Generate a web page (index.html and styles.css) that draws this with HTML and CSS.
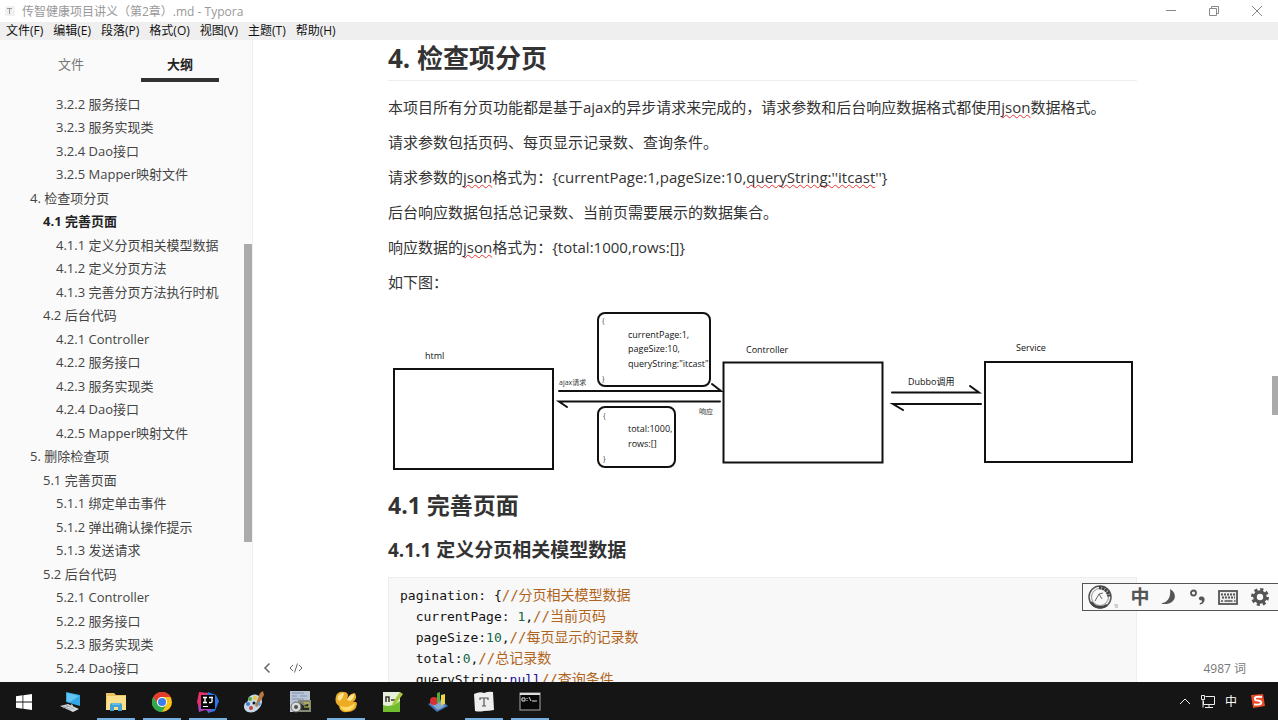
FILE: index.html
```html
<!DOCTYPE html>
<html lang="zh-CN">
<head>
<meta charset="utf-8">
<title>传智健康项目讲义（第2章）.md - Typora</title>
<link rel="stylesheet" href="styles.css">
</head>
<body>
<header class="titlebar">
  <svg class="app-icon" width="12" height="12" viewBox="0 0 12 12"><rect x="1" y="1" width="10" height="10" rx="1" fill="#f1f1f1"/><path d="M3 3.500h5M5.500 3.500v5.500" stroke="#999" fill="none"/></svg>
  <span class="window-title">传智健康项目讲义（第2章）.md - Typora</span>
  <div class="window-controls">
    <button aria-label="最小化"><svg width="12" height="12" viewBox="0 0 12 12"><path d="M1 5.500h10"/></svg></button>
    <button aria-label="还原"><svg width="12" height="12" viewBox="0 0 12 12"><path d="M1.500 3.500h7v7h-7zM3.500 3.500v-2h7v7h-2"/></svg></button>
    <button aria-label="关闭"><svg width="12" height="12" viewBox="0 0 12 12"><path d="M1 1l10 10M11 1L1 11"/></svg></button>
  </div>
</header>
<nav class="menubar">
  <button>文件(F)</button><button>编辑(E)</button><button>段落(P)</button><button>格式(O)</button><button>视图(V)</button><button>主题(T)</button><button>帮助(H)</button>
</nav>
<div class="workspace">
  <aside class="sidebar">
    <div class="tabs"><button class="tab">文件</button><button class="tab active">大纲</button></div>
    <nav class="outline">
      <a class="l3" href="#">3.2.2 服务接口</a>
      <a class="l3" href="#">3.2.3 服务实现类</a>
      <a class="l3" href="#">3.2.4 Dao接口</a>
      <a class="l3" href="#">3.2.5 Mapper映射文件</a>
      <a class="l1" href="#s4">4. 检查项分页</a>
      <a class="l2 current" href="#s41">4.1 完善页面</a>
      <a class="l3" href="#s411">4.1.1 定义分页相关模型数据</a>
      <a class="l3" href="#">4.1.2 定义分页方法</a>
      <a class="l3" href="#">4.1.3 完善分页方法执行时机</a>
      <a class="l2" href="#">4.2 后台代码</a>
      <a class="l3" href="#">4.2.1 Controller</a>
      <a class="l3" href="#">4.2.2 服务接口</a>
      <a class="l3" href="#">4.2.3 服务实现类</a>
      <a class="l3" href="#">4.2.4 Dao接口</a>
      <a class="l3" href="#">4.2.5 Mapper映射文件</a>
      <a class="l1" href="#">5. 删除检查项</a>
      <a class="l2" href="#">5.1 完善页面</a>
      <a class="l3" href="#">5.1.1 绑定单击事件</a>
      <a class="l3" href="#">5.1.2 弹出确认操作提示</a>
      <a class="l3" href="#">5.1.3 发送请求</a>
      <a class="l2" href="#">5.2 后台代码</a>
      <a class="l3" href="#">5.2.1 Controller</a>
      <a class="l3" href="#">5.2.2 服务接口</a>
      <a class="l3" href="#">5.2.3 服务实现类</a>
      <a class="l3" href="#">5.2.4 Dao接口</a>
    </nav>
    <div class="side-thumb"></div>
  </aside>
  <main class="editor">
    <article class="document">
      <h1 id="s4">4. 检查项分页</h1>
      <p>本项目所有分页功能都是基于ajax的异步请求来完成的，请求参数和后台响应数据格式都使用<span class="typo">json</span>数据格式。</p>
      <p>请求参数包括页码、每页显示记录数、查询条件。</p>
      <p>请求参数的<span class="typo">json</span>格式为：{currentPage:1,pageSize:10,<span class="typo">queryString:''itcast</span>''}</p>
      <p>后台响应数据包括总记录数、当前页需要展示的数据集合。</p>
      <p>响应数据的<span class="typo">json</span>格式为：{total:1000,rows:[]}</p>
      <p>如下图：</p>
      <svg class="diagram" viewBox="388 305 749 170" role="img" aria-label="分页请求流程">
        <g class="shape">
          <rect x="394" y="369" width="159" height="100"/>
          <rect x="598" y="313" width="112" height="73" rx="7"/>
          <rect x="598" y="407" width="77" height="60" rx="7"/>
          <rect x="723.500" y="362.500" width="159" height="100"/>
          <rect x="985" y="362" width="147" height="100"/>
          <path d="M559 391H721L712 384M720 401.500H559L567 407M892 392.500H979L970 386M981 404H893L903 410"/>
        </g>
        <g class="labels">
          <text x="425" y="359">html</text>
          <text x="746" y="353">Controller</text>
          <text x="1016" y="351">Service</text>
          <text x="628" y="338">currentPage:1,</text>
          <text x="628" y="352">pageSize:10,</text>
          <text x="628" y="367">queryString:"itcast"</text>
          <text x="628" y="432">total:1000,</text>
          <text x="628" y="447">rows:[]</text>
          <text x="908" y="385">Dubbo调用</text>
          <g class="small">
            <text x="559" y="385">ajax请求</text>
            <text x="699" y="414">响应</text>
            <text x="602" y="323">{</text><text x="602" y="381">}</text>
            <text x="603" y="418">{</text><text x="603" y="461">}</text>
          </g>
        </g>
      </svg>
      <h2 id="s41">4.1 完善页面</h2>
      <h3 id="s411">4.1.1 定义分页相关模型数据</h3>
      <pre class="code">pagination: {<span class="comment">//分页相关模型数据</span>
  currentPage: <span class="number">1</span>,<span class="comment">//当前页码</span>
  pageSize:<span class="number">10</span>,<span class="comment">//每页显示的记录数</span>
  total:<span class="number">0</span>,<span class="comment">//总记录数</span>
  queryString:<span class="atom">null</span><span class="comment">//查询条件</span>
</pre>
    </article>
    <div class="status-left">
      <button aria-label="收起侧栏"><svg width="8" height="12" viewBox="0 0 8 12"><path d="M6.500 1.500L2 6l4.500 4.500"/></svg></button>
      <button aria-label="源代码模式"><svg width="14" height="12" viewBox="0 0 14 12"><path class="thin" d="M4 3L1 6l3 3M10 3l3 3-3 3M8.500 1.500l-3 9"/></svg></button>
    </div>
    <div class="word-count">4987 词</div>
    <div class="page-thumb"></div>
    <div class="ime">
      <svg class="ime-logo" width="32" height="26" viewBox="0 0 32 26"><circle cx="13" cy="13" r="11" fill="none" stroke="#555" stroke-width="1.500"/><circle cx="13" cy="13" r="8.500" fill="none" stroke="#777" stroke-width=".8"/><path d="M12 3.500a10 10 0 0 1 10 9" fill="none" stroke="#444" stroke-width="3.500" stroke-dasharray="2.500 .7"/><path d="M4 18a11 11 0 0 0 16 3" fill="none" stroke="#444" stroke-width="2.500"/><path d="M8 17l4-7 3 5M12 10l4-1" fill="none" stroke="#666"/><path d="M27 21h4M28 23h3" stroke="#aaa"/></svg>
      <span class="ime-mode">中</span>
      <svg width="16" height="18" viewBox="0 0 16 18"><path d="M9 1c9 5 5 16-7 15q-2 0-1-1c6-1 9-6 8-14z" fill="#555"/></svg>
      <svg width="18" height="18" viewBox="0 0 18 18"><circle cx="4.500" cy="5" r="2.500" fill="none" stroke="#555" stroke-width="1.800"/><path d="M12 8.500c5-1 5 7-1 8l-.5-1c2-.8 3-1.800 2.500-3-4 0-4-3.500-1-4z" fill="#555"/></svg>
      <svg width="20" height="15" viewBox="0 0 20 15"><rect x="1" y="1" width="18" height="13" fill="#eee" stroke="#555" stroke-width="1.800"/><path d="M3 4.500h14M4 7.500h13" stroke="#555" stroke-width="1.800" stroke-dasharray="2 1"/><path d="M3 11h2M6.500 11h8M16 11h1.500" stroke="#555" stroke-width="1.600"/></svg>
      <svg width="20" height="20" viewBox="0 0 20 20"><circle cx="10" cy="10" r="5" fill="none" stroke="#555" stroke-width="3.600"/><circle cx="10" cy="10" r="7.500" fill="none" stroke="#555" stroke-width="3" stroke-dasharray="3.100 2.790"/></svg>
    </div>
  </main>
</div>
<footer class="taskbar">
  <button class="start" aria-label="开始"><svg width="16" height="16" viewBox="0 0 16 16" fill="#fff"><path d="M0 2.300l6.500-1v6.300H0zM7.300 1.200L16 0v7.600H7.300zM0 8.400h6.500v6.300L0 13.700zM7.300 8.400H16V16l-8.700-1.200z"/></svg></button>
  <button aria-label="此电脑"><svg width="22" height="22" viewBox="0 0 22 22"><path d="M7 1l14 3v11L7 11z" fill="#35a7e6"/><path d="M8 2l12 3-9 6-3-1z" fill="#63c5f4"/><path d="M12 13l2 1v3l-2 1z" fill="#aeb8bd"/><path d="M1 15l8-2 11 5-6 3z" fill="#d3d9dc"/><path d="M4 15l8 4M7 14l8 4M4 17l6-2" stroke="#8d999f" stroke-width=".7"/></svg></button>
  <button class="open" aria-label="资源管理器"><svg width="22" height="20" viewBox="0 0 22 20"><path d="M1 1h8l2 2h10v15H1z" fill="#e9c35f"/><path d="M2 4h19v14H1z" fill="#fbdf8a"/><path d="M5 19v-6q0-2 2-2h8q2 0 2 2v6h-4v-4H9v4z" fill="#3fa4d5"/><path d="M7 12h8" stroke="#89d3f4"/></svg></button>
  <button class="open" aria-label="Chrome"><svg width="22" height="22" viewBox="0 0 22 22"><circle cx="11" cy="11" r="10" fill="#fbc116"/><path d="M2.300 6A10 10 0 0 1 19.700 6H11a5 5 0 0 0-4.300 7.500z" fill="#e33b2e"/><path d="M2.300 6A10 10 0 0 0 11 21l4.300-7.500A5 5 0 0 1 6.700 13.500z" fill="#2da94f"/><circle cx="11" cy="11" r="5" fill="#fff"/><circle cx="11" cy="11" r="4" fill="#3b7ded"/></svg></button>
  <button class="open" aria-label="IntelliJ IDEA"><svg width="24" height="24" viewBox="0 0 24 24"><path d="M3 2l9 1 1 10-9 8-3-9z" fill="#e9306a"/><path d="M12 2l8 3 3 6-4 10-7 2-3-9z" fill="#2877e8"/><path d="M2 16l9-4 5 10-7-2-6 2z" fill="#a841ba"/><rect x="5" y="5" width="14" height="14" fill="#080808"/><path d="M7 7.500h4M9 7.500v5M7 12.500h4M13 7.500h4M16 7.500v4q0 1.300-3 1" stroke="#fff" stroke-width="1.300" fill="none"/><path d="M7 16.500h5" stroke="#fff"/></svg></button>
  <button aria-label="画图"><svg width="24" height="24" viewBox="0 0 24 24"><path d="M15 5c8 2 6 13-3 17-8 2-12-4-9-9 4-1 2-3 4-6 2-2 5-3 8-2z" fill="#c8d9e6"/><path d="M18 3l3-2 1 4-7 12-2-1z" fill="#b8783e"/><circle cx="8" cy="9" r="2" fill="#58a743"/><circle cx="13" cy="8" r="2" fill="#e8c63b"/><circle cx="6" cy="14" r="2" fill="#3d7dd0"/><circle cx="9" cy="18" r="2" fill="#cb4140"/><circle cx="12" cy="13" r="1.500" fill="#151515"/><circle cx="17" cy="14" r="1.700" fill="#4e9bd8"/></svg></button>
  <button aria-label="工具"><svg width="24" height="24" viewBox="0 0 24 24"><path d="M2 1h20v12H2z" fill="#b9c4d5"/><path d="M2 13h8v9H2z" fill="#c9ced6"/><path d="M4 3h12M4 6h5M12 6h7M4 9h12" stroke="#8294b2" stroke-width="1.200"/><rect x="10" y="10" width="13" height="12" fill="#858a78"/><path d="M12 13l4 3 5-3v7h-9z" fill="#282b25"/><path d="M16 13h5v4h-5" stroke="#d1cf44" fill="none"/><circle cx="8" cy="17" r="5" fill="#dadada" stroke="#626a71"/><circle cx="8" cy="17" r="2" fill="#515151"/></svg></button>
  <button class="open" aria-label="金币"><svg width="24" height="24" viewBox="0 0 24 24"><path d="M2 6Q4 1 10 2q4 0 4 4l-1 3q3-6 8-6 3 6-2 9 4-1 4 2-1 8-10 8-7 1-8-6Q0 13 2 6z" fill="#ecac26"/><path d="M4 6q2-3 6-3-1 6-5 8-2-2-1-5zM13 10q2-5 7-6 1 4-4 7z" fill="#ffe494"/><path d="M6 16q8 3 15-3-1 8-9 8-5-1-6-5z" fill="#ffda64"/></svg></button>
  <button aria-label="记事本"><svg width="22" height="24" viewBox="0 0 22 24"><path d="M2 2h17v20H2z" fill="#e8efd9"/><path d="M2 15q8 3 17-4v11H2z" fill="#71bd2f"/><path d="M5 12V7h3v5M10 10h4" stroke="#333" fill="none" stroke-width="1.500"/><path d="M19 2l3 2-8 11-3 1 1-4z" fill="#a5c83c"/></svg></button>
  <button aria-label="图形"><svg width="22" height="22" viewBox="0 0 22 22"><path d="M1 13l12-5 8 7-11 6z" fill="#4574b4"/><path d="M4 13l9-3 5 5-7 4z" fill="#84a9d1"/><circle cx="7" cy="10" r="4" fill="#db3032"/><path d="M10 2l3-1v10l-3 1z" fill="#50ac3d"/><path d="M14 4l4-1v10l-4 1z" fill="#ecd44a"/></svg></button>
  <button class="open" aria-label="Typora"><svg width="22" height="22" viewBox="0 0 22 22"><path d="M1 3q6-3 10-1 5-2 9-1l1 18q-5 1-10 1-5 1-9 0z" fill="#eee"/><path d="M7 9V7h8v2M11 7v8M9 15h4" fill="none" stroke="#555" stroke-width="1.200"/></svg></button>
  <button class="open" aria-label="命令提示符"><svg width="22" height="20" viewBox="0 0 22 20"><rect x="1" y="1" width="20" height="17" fill="#080808" stroke="#aaa"/><path d="M1 2h20" stroke="#ddd" stroke-width="2"/><path d="M3 9V6h3v3H3M8 6v1M8 8v1M10 5l2 4M13 9h5" stroke="#ddd" fill="none"/></svg></button>
  <div class="tray">
    <svg width="12" height="8" viewBox="0 0 12 8"><path d="M1 7l5-5 5 5"/></svg>
    <svg width="16" height="15" viewBox="0 0 16 15"><path d="M5.500 2.500h9v8h-11V7M9 10.500v3M5 13.500h8M1.500 1.500h3v4h-3zM3 5.500v8"/></svg>
    <span class="tray-text">中</span>
    <svg class="sogou" width="14" height="16" viewBox="0 0 14 16"><path d="M0 2l12-1 2 12-12 2z"/><path d="M11 4Q3 3 4 6q0 1.500 3 1.500 4 .5 3 3Q9 12 3 11.500"/></svg>
  </div>
</footer>
</body>
</html>
```
FILE: styles.css
```css
* { box-sizing: border-box; }

body {
  margin: 0;
  height: 100vh;
  display: flex;
  flex-direction: column;
  overflow: hidden;
  background: #fff;
  color: #333;
  font-family: "Open Sans", "Noto Sans CJK SC", sans-serif;
}

button {
  border: 0;
  padding: 0;
  background: none;
  color: inherit;
  font: inherit;
}

a { color: inherit; text-decoration: none; }
svg { display: block; flex: none; }

.titlebar {
  flex: none;
  height: 22px;
  display: flex;
  align-items: center;
  padding-left: 4px;
  gap: 6px;
  color: #999;
  font-size: 12px;
}

.window-title { flex: 1; }
.window-controls { display: flex; }
.window-controls button {
  width: 43px;
  height: 20px;
  display: grid;
  place-items: center;
}
.window-controls path { fill: none; stroke: #888; }

.menubar {
  flex: none;
  height: 18px;
  display: flex;
  align-items: center;
  gap: 10px;
  padding-left: 6px;
  background: #efefef;
  color: #111;
  font-size: 12px;
  line-height: 20px;
}

.workspace { flex: 1; min-height: 0; display: flex; }

.sidebar {
  position: relative;
  flex: none;
  width: 253px;
  display: flex;
  flex-direction: column;
  gap: 11px;
  padding-bottom: 2px;
  background: #fafafa;
  border-right: 1px solid #eee;
  color: #444;
  font-size: 13px;
}

.tabs { display: flex; gap: 31px; padding-left: 32px; }
.tab {
  width: 78px;
  height: 42px;
  padding-top: 8px;
  border-bottom: 4px solid transparent;
  color: #777;
}
.tab.active { border-color: #333; color: #222; font-weight: 700; }

.outline {
  flex: 1;
  min-height: 0;
  display: grid;
  grid-auto-rows: 1fr;
  line-height: 23px;
  white-space: nowrap;
}
.l1 { padding-left: 30px; }
.l2 { padding-left: 43px; }
.l3 { padding-left: 56px; }
.current { color: #222; font-weight: 700; }

.side-thumb {
  position: absolute;
  top: 204px;
  right: 0;
  width: 8px;
  height: 298px;
  background: #ababab;
}

.editor {
  position: relative;
  flex: 1;
  min-width: 0;
  overflow: hidden;
  padding-right: 6px;
}

.document { max-width: 749px; margin: 0 auto; font-size: 15px; }

h1 {
  margin: 0 0 14px;
  padding-bottom: 4px;
  border-bottom: 1px solid #eee;
  font-size: 26px;
  line-height: 36px;
}
h2 { margin: 14px 0 16px; font-size: 23px; line-height: 32px; }
h3 { margin: 16px 0 14px; font-size: 19px; line-height: 26px; }
p { margin: 0 0 11px; line-height: 24px; white-space: nowrap; }

.typo { text-decoration: underline wavy #e33 1px; text-underline-offset: 1px; text-decoration-skip-ink: none; }

.diagram { width: 100%; }
.shape { fill: none; stroke: #111; stroke-width: 2px; stroke-linecap: round; }
.labels { fill: #111; font-size: 9px; }
.small { fill: #333; font-size: 7px; }

.code {
  margin: 0;
  padding: 7px 11px;
  background: #f8f8f8;
  border: 1px solid #eee;
  color: #111;
  font-family: "DejaVu Sans Mono", "Noto Sans CJK SC", monospace;
  font-size: 13px;
  line-height: 21px;
}
.comment { color: #b0641c; font-size: 14px; }
.number { color: #164; }
.atom { color: #219; }

.status-left {
  position: absolute;
  left: 10px;
  bottom: 6px;
  display: flex;
  gap: 18px;
}
.status-left button { height: 16px; display: grid; place-items: center; }
.status-left path { fill: none; stroke: #666; stroke-width: 1.5px; }
.status-left .thin { stroke-width: 1px; }

.word-count {
  position: absolute;
  right: 32px;
  bottom: 4px;
  color: #777;
  font-size: 12px;
  line-height: 18px;
}

.page-thumb {
  position: absolute;
  top: 336px;
  right: 0;
  width: 6px;
  height: 39px;
  background: #aaa;
}

.ime {
  position: absolute;
  right: 0;
  bottom: 71px;
  width: 196px;
  height: 28px;
  display: flex;
  align-items: center;
  justify-content: space-between;
  padding: 0 8px 0 4px;
  border: 1px solid #555;
  border-right: 0;
  background: #f9f9f9;
}
.ime-mode { color: #555; font-size: 19px; font-weight: 700; line-height: 26px; }

.taskbar {
  flex: none;
  height: 38px;
  display: flex;
  background: #151515;
}
.taskbar button {
  width: 46px;
  display: grid;
  place-items: center;
  padding-top: 2px;
}
.taskbar .start { width: 47px; }
.taskbar .open {
  background: linear-gradient(#76b0e0, #76b0e0) center bottom / 38px 2px no-repeat;
}

.tray {
  flex: 1;
  display: flex;
  align-items: center;
  justify-content: flex-end;
  gap: 9px;
  padding-right: 13px;
  color: #fff;
}
.tray path { fill: none; stroke: #eee; }
.tray .sogou path:first-child { fill: #ed4b26; stroke: none; }
.tray .sogou path:last-child { stroke: #fff; stroke-width: 2px; }
.tray-text { font-size: 12px; margin-right: 5px; }
```
